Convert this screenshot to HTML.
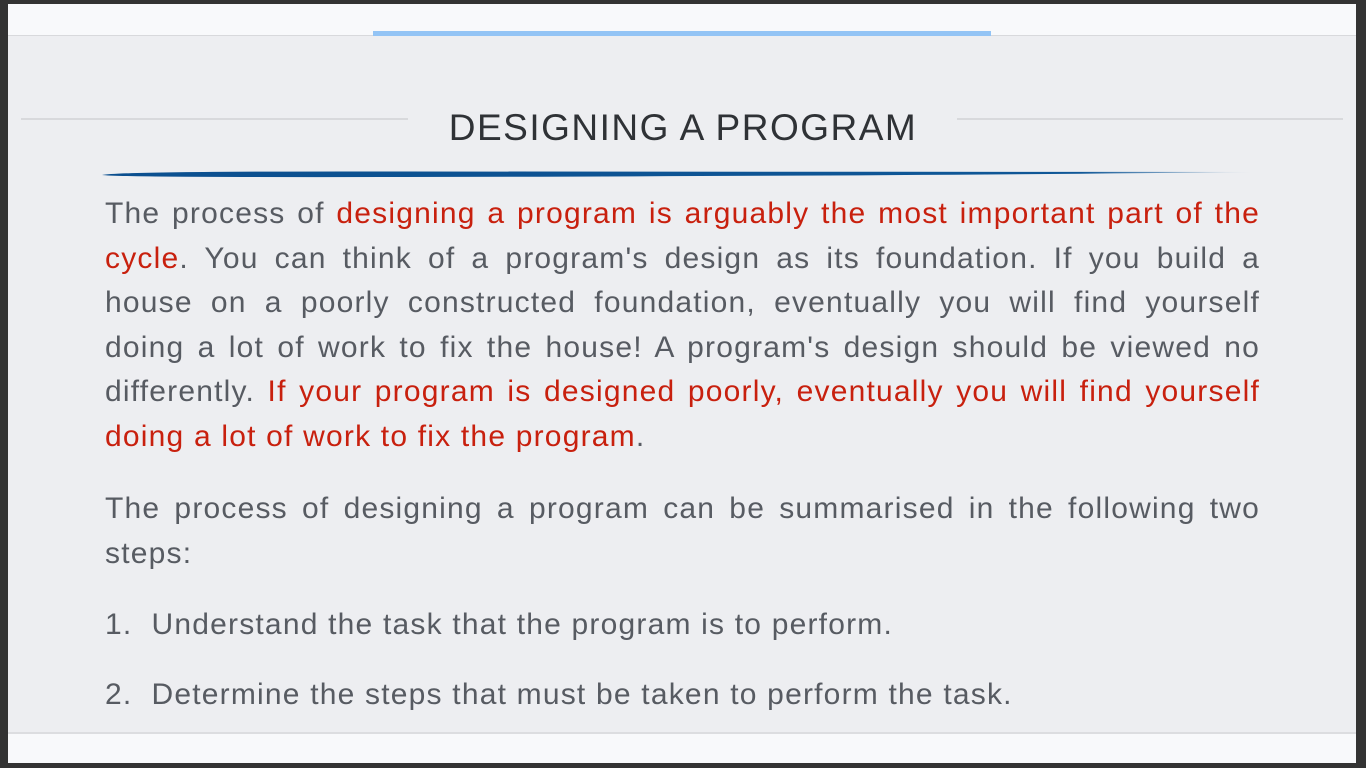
<!DOCTYPE html>
<html><head><meta charset="utf-8"><style>
html,body{margin:0;padding:0;}
body{width:1366px;height:768px;background:#333;position:relative;overflow:hidden;font-family:"Liberation Sans","DejaVu Sans",sans-serif;}
#top{position:absolute;left:8px;top:4px;width:1348px;height:31px;background:#f8f9fb;border-bottom:1px solid #d8d9dc;}
#bar{position:absolute;left:373px;top:31px;width:618px;height:5px;background:#93c4f5;}
#slide{position:absolute;left:8px;top:36px;width:1348px;height:696px;background:#edeef1;}
#bot{position:absolute;left:8px;top:732px;width:1348px;height:29px;background:#f8f9fb;border-top:2px solid #dcdde0;}
.hl{position:absolute;top:118px;height:2px;background:#d8d9dc;}
h1{position:absolute;left:0;width:1366px;top:105px;margin:0;text-align:center;font-weight:normal;font-size:37px;letter-spacing:1.5px;color:#2f3236;line-height:46px;}
#brush{position:absolute;left:102px;top:170px;width:1150px;height:8px;}
.t{position:absolute;left:105px;width:1155px;font-size:30px;letter-spacing:1.2px;color:#575b62;line-height:44.5px;}
.j{text-align:justify;text-align-last:justify;height:44.5px;white-space:nowrap;}
.j.n{text-align-last:left;}
.j span,.r{color:#c8200e;}
</style></head><body>
<div id="top"></div>
<div id="slide"></div>
<div id="bar"></div>
<div id="bot"></div>
<div class="hl" style="left:21px;width:387px"></div>
<div class="hl" style="left:957px;width:386px"></div>
<h1>DESIGNING A PROGRAM</h1>
<svg id="brush" viewBox="0 0 1150 8" preserveAspectRatio="none"><defs><linearGradient id="g" x1="0" x2="1"><stop offset="0" stop-color="#0b4f8f"/><stop offset="0.85" stop-color="#0f5797"/><stop offset="1" stop-color="#0f5797" stop-opacity="0.1"/></linearGradient></defs><path d="M0 5 Q20 1 300 1.5 L1150 2 Q800 6 300 7 Q20 7.5 0 5Z" fill="url(#g)"/></svg>
<div class="t" style="top:192px">
<div class="j" style="white-space:normal">The process of <span>designing a program is arguably the most important part of the</span></div>
<div class="j" style="white-space:normal"><span>cycle</span>. You can think of a program's design as its foundation. If you build a</div>
<div class="j" style="white-space:normal">house on a poorly constructed foundation, eventually you will find yourself</div>
<div class="j" style="white-space:normal">doing a lot of work to fix the house! A program's design should be viewed no</div>
<div class="j" style="white-space:normal">differently. <span>If your program is designed poorly, eventually you will find yourself</span></div>
<div class="j n"><span>doing a lot of work to fix the program</span>.</div>
</div>
<div class="t" style="top:487px">
<div class="j" style="white-space:normal">The process of designing a program can be summarised in the following two</div>
<div class="j n">steps:</div>
</div>
<div class="t" style="top:603px"><div class="j n">1.&nbsp; Understand the task that the program is to perform.</div></div>
<div class="t" style="top:673px"><div class="j n">2.&nbsp; Determine the steps that must be taken to perform the task.</div></div>
</body></html>
